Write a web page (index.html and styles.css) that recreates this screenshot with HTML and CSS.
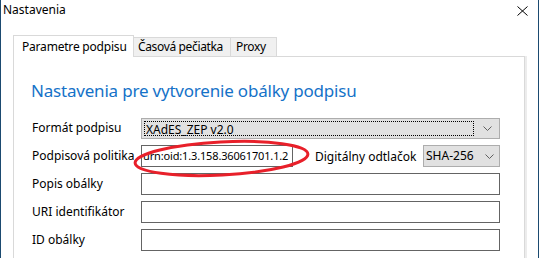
FILE: index.html
```html
<!DOCTYPE html>
<html>
<head>
<meta charset="utf-8">
<link rel="stylesheet" href="styles.css">
</head>
<body>
<div class="window">
  <div class="titlebar">
    <span class="title">Nastavenia</span>
    <svg class="close" width="11" height="10" viewBox="0 0 11 10"><path d="M0.5 0.5 L10.5 9.5 M10.5 0.5 L0.5 9.5" stroke="#000" stroke-width="1" fill="none"/></svg>
  </div>
  <div class="tabs">
    <div class="tab active">Parametre podpisu</div>
    <div class="tab">Časová pečiatka</div>
    <div class="tab">Proxy</div>
  </div>
  <div class="panel">
    <h1 class="heading">Nastavenia pre vytvorenie obálky podpisu</h1>
    <div class="form">
      <div class="label">Formát podpisu</div>
      <div class="select wide"><span class="focus">XAdES_ZEP v2.0</span><span class="chev"><svg width="9" height="5" viewBox="0 0 9 5"><path d="M0.5 0.5 L4.5 4.5 L8.5 0.5" stroke="#606060" fill="none"/></svg></span></div>

      <div class="label">Podpisová politika</div>
      <div class="split">
        <div class="input short">urn:oid:1.3.158.36061701.1.2</div>
        <div class="label2">Digitálny odtlačok</div>
        <div class="select small"><span class="val">SHA-256</span><span class="chev"><svg width="9" height="5" viewBox="0 0 9 5"><path d="M0.5 0.5 L4.5 4.5 L8.5 0.5" stroke="#606060" fill="none"/></svg></span></div>
      </div>

      <div class="label">Popis obálky</div>
      <div class="input"></div>

      <div class="label">URI identifikátor</div>
      <div class="input"></div>

      <div class="label">ID obálky</div>
      <div class="input"></div>
    </div>
  </div>
  <svg class="mark" width="539" height="258" viewBox="0 0 539 258">
    <ellipse cx="221.5" cy="158.5" rx="86.5" ry="16.5" transform="rotate(-3 221.5 158.5)" fill="none" stroke="#e8202a" stroke-width="3"/>
  </svg>
</div>
</body>
</html>
```

FILE: styles.css
```css
html, body {
  margin: 0;
  padding: 0;
  background: #ffffff;
}
body {
  font-family: "Noto Sans", "Open Sans", sans-serif;
  font-size: 12px;
  color: #000;
}
.window {
  position: relative;
  width: 539px;
  height: 258px;
  box-sizing: border-box;
  border-left: 1px solid #1b4a70;
  border-right: 1px solid #1b4a70;
  overflow: hidden;
  background: #fff;
}
.titlebar {
  height: 35px;
  display: flex;
  align-items: flex-start;
  justify-content: space-between;
  padding: 0 10px 0 2px;
}
.title {
  line-height: 20px;
  font-size: 12px;
}
.close {
  margin-top: 6px;
}
.tabs {
  display: flex;
  align-items: flex-end;
  margin-left: 12px;
  height: 21px;
}
.tab {
  box-sizing: border-box;
  height: 19px;
  line-height: 18px;
  padding: 0 0 0 4px;
  background: #f0f0f0;
  border: 1px solid #d9d9d9;
  border-bottom: none;
  border-left: none;
  white-space: nowrap;
  letter-spacing: -0.35px;
  overflow: hidden;
}
.tab.active {
  height: 22px;
  margin-bottom: -1px;
  background: #fff;
  border-left: 1px solid #d9d9d9;
  padding: 0 0 0 8px;
  line-height: 21px;
  width: 121px;
  position: relative;
  z-index: 1;
  letter-spacing: -0.2px;
}
.tab:nth-child(2) { width: 97px; }
.tab:nth-child(3) { width: 46px; padding-left: 5px; }
.panel {
  margin-left: 12px;
  width: 512px;
  height: 210px;
  box-sizing: border-box;
  border: 1px solid #d9d9d9;
  border-bottom: none;
  box-shadow: 2px 0 0 #ececec;
  padding: 22px 0 0 17px;
}
.heading {
  margin: 0;
  font-weight: normal;
  font-size: 17px;
  line-height: 24px;
  color: #1572c8;
  letter-spacing: -0.2px;
}
.form {
  margin-top: 14px;
  display: grid;
  grid-template-columns: 110px 359px;
  row-gap: 6px;
  align-items: center;
}
.label {
  padding-left: 1px;
  line-height: 22px;
  white-space: nowrap;
}
.select {
  box-sizing: border-box;
  height: 21px;
  background: #e1e1e1;
  border: 1px solid #adadad;
  display: flex;
  align-items: center;
  justify-content: space-between;
}
.select.wide {
  width: 359px;
  padding: 2px;
}
.focus {
  flex: 1;
  height: 15px;
  line-height: 15px;
  border: 1px dotted #000;
  padding-left: 1px;
  box-sizing: border-box;
}
.chev {
  width: 20px;
  display: flex;
  justify-content: center;
  padding-left: 3px;
}
.split {
  display: flex;
  align-items: center;
}
.input {
  box-sizing: border-box;
  height: 22px;
  width: 359px;
  border: 1px solid #646464;
  background: #fff;
  line-height: 20px;
  padding-left: 2px;
}
.input.short {
  width: 152px;
  white-space: nowrap;
  overflow: hidden;
  font-size: 11px;
  letter-spacing: -0.15px;
  padding-left: 1px;
}
.label2 {
  margin-left: 22px;
  width: 108px;
  white-space: nowrap;
}
.select.small {
  width: 77px;
  height: 22px;
  padding-left: 2px;
}
.val {
  line-height: 20px;
}
.mark {
  position: absolute;
  left: -1px;
  top: 0;
  pointer-events: none;
}
```
